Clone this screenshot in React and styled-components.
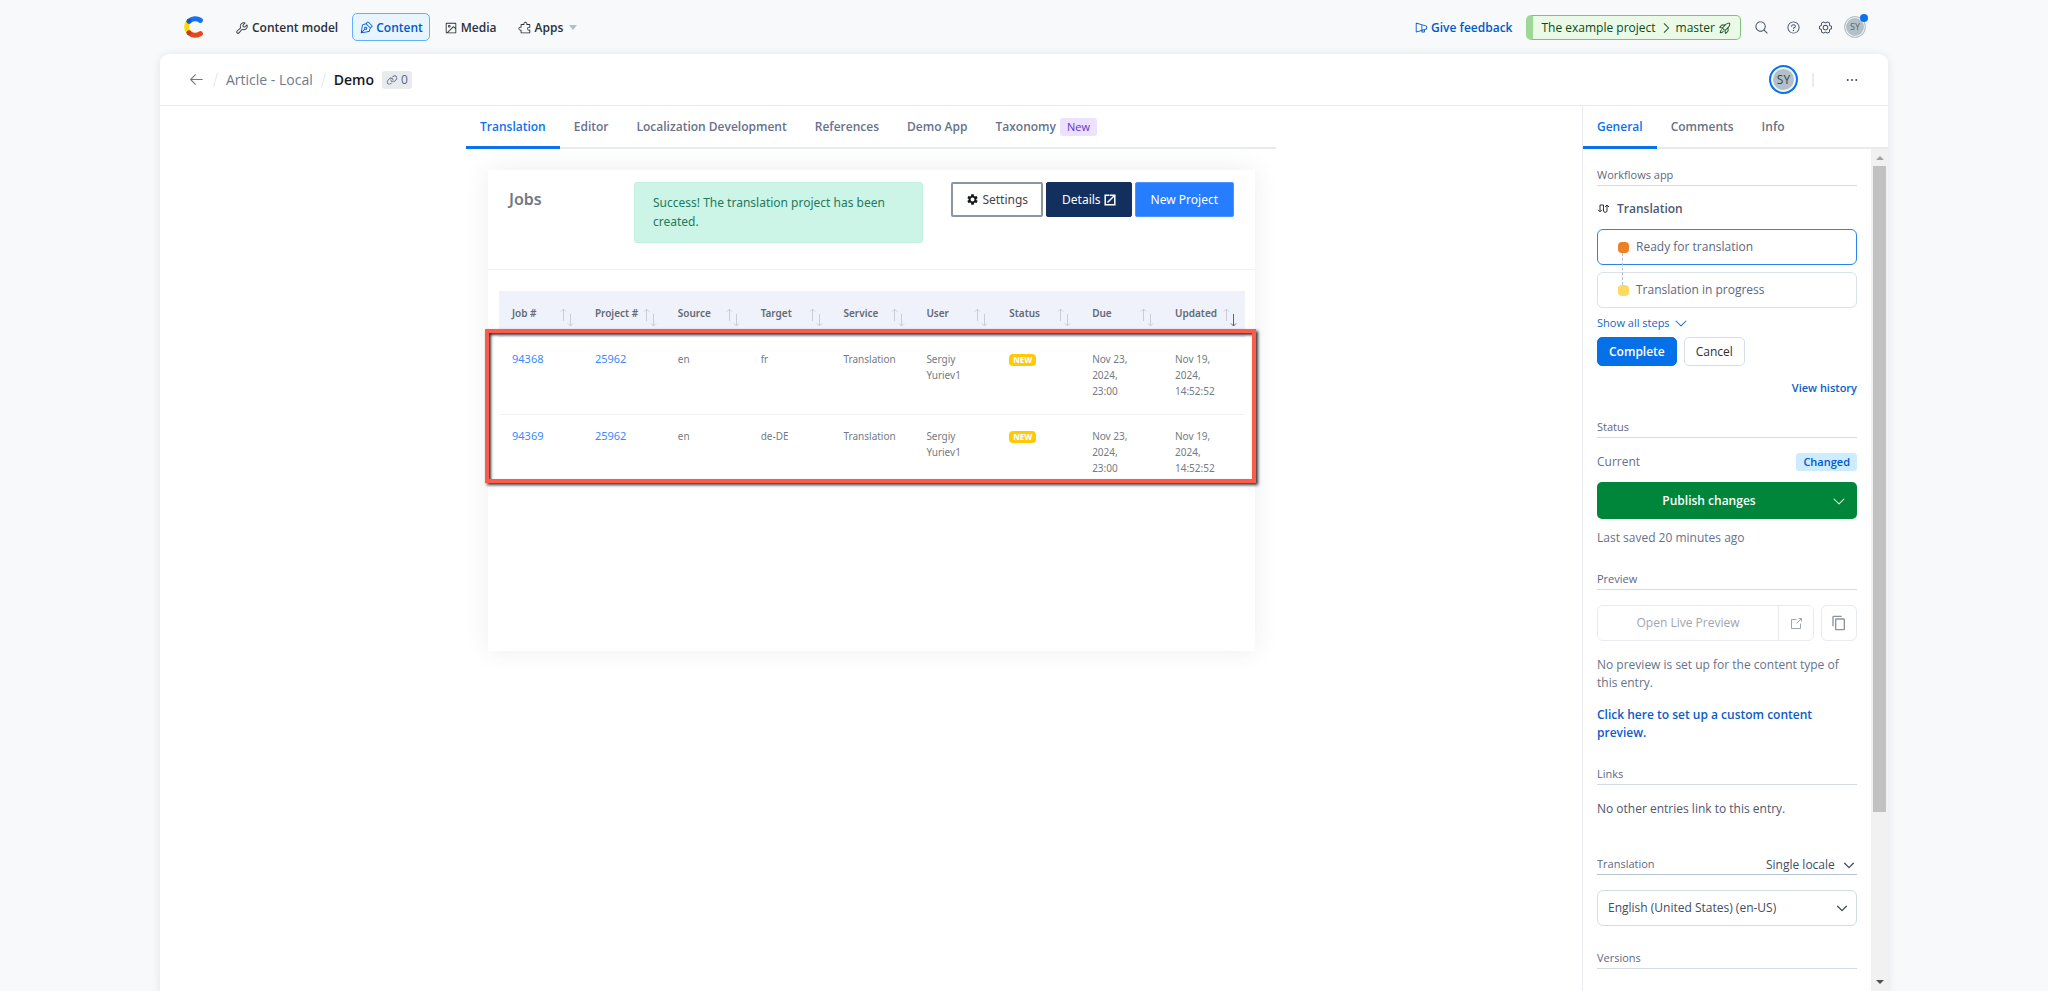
import React from "react";
import styled, { createGlobalStyle, css } from "styled-components";
import {
  PiWrench,
  PiPenNib,
  PiImageSquare,
  PiPuzzlePiece,
  PiMegaphoneSimple,
  PiRocketLaunch,
  PiMagnifyingGlass,
  PiQuestion,
  PiGearSix,
  PiLink,
  PiArrowLeft,
  PiDotsThreeBold,
  PiCaretDown,
  PiCaretDownBold,
  PiCaretRight,
} from "react-icons/pi";
import { MdSettings, MdContentCopy } from "react-icons/md";

const uiFont = '"Open Sans", "Noto Sans", sans-serif';
const appFont = '"Noto Sans", "Open Sans", sans-serif';

const GlobalStyle = createGlobalStyle`
  * { box-sizing: border-box; }
  body {
    margin: 0;
    background: #f7f9fa;
    color: #414d63;
    font: 12px/18px ${uiFont};
  }
  button, input, select { font: inherit; color: inherit; }
  button { cursor: pointer; }
  a { text-decoration: none; }
  h1, h2, h3, p, ul, ol { margin: 0; padding: 0; font-size: inherit; font-weight: inherit; }
  ul, ol { list-style: none; }
`;

/* ---------- page frame ---------- */

const Shell = styled.div`
  display: flex;
  flex-direction: column;
  height: 100vh;
  width: 100%;
  max-width: 1728px;
  margin: 0 auto;
`;

const TopBar = styled.header`
  display: flex;
  flex: none;
  align-items: center;
  justify-content: space-between;
  height: 54px;
  padding: 0 22px 0 23px;
`;

const Cluster = styled.div`
  display: flex;
  align-items: center;
`;

const MainNav = styled.nav`
  display: flex;
  align-items: center;
  gap: 7px;
  margin-left: 23px;
`;

const NavItem = styled.a`
  display: flex;
  align-items: center;
  gap: 3px;
  height: 28px;
  padding: 1px 6px 0;
  border: 1px solid transparent;
  border-radius: 5px;
  font-weight: 600;
  color: #2a3039;
  svg { flex: none; font-size: 14px; }
  ${(p) =>
    p.$active &&
    css`
      color: #0059c8;
      background: #e8f5ff;
      border-color: #5fb0ff;
    `}
`;

const DownTriangle = styled.span`
  border: 4px solid transparent;
  border-top: 5px solid #aec1cc;
  border-bottom: 0;
  margin-left: 3px;
`;

const Feedback = styled.a`
  display: flex;
  align-items: center;
  gap: 3px;
  margin-right: 14px;
  padding-top: 1px;
  font-weight: 600;
  color: #0059c8;
  svg { font-size: 14px; }
`;

const EnvButton = styled.button`
  display: flex;
  align-items: center;
  gap: 3px;
  height: 25px;
  margin-right: 12px;
  padding: 1px 8px 0;
  border: 1px solid #7ac47a;
  border-left-width: 7px;
  border-left-color: #9fd796;
  border-radius: 5px;
  background: #eafae6;
  font-weight: 500;
  color: #0b4a1b;
  svg { font-size: 14px; }
`;

const IconButton = styled.button`
  display: flex;
  align-items: center;
  justify-content: center;
  width: 32px;
  height: 24px;
  padding: 0;
  border: 0;
  background: none;
  color: #414d63;
  font-size: ${(p) => p.$size || 15}px;
`;

const TopIcons = styled.div`
  display: flex;
  margin: 0 3px 0 -8px;
`;

const Avatar = styled.button`
  position: relative;
  width: ${(p) => (p.$large ? 29 : 22)}px;
  height: ${(p) => (p.$large ? 29 : 22)}px;
  padding: 0;
  border: ${(p) => (p.$large ? "2px solid #0b72ee" : "1px solid #b4c3ca")};
  border-radius: 50%;
  background: #b4c0c7;
  box-shadow: inset 0 0 0 ${(p) => (p.$large ? 2 : 1)}px #f3f6f8;
  font-size: ${(p) => (p.$large ? 12 : 9)}px;
  line-height: 18px;
  color: ${(p) => (p.$large ? "#36424f" : "#566570")};
`;

const UnreadDot = styled.span`
  position: absolute;
  top: -3px;
  right: -3px;
  width: 8px;
  height: 8px;
  border-radius: 50%;
  background: #0b72ee;
`;

const Card = styled.main`
  display: flex;
  flex: 1;
  flex-direction: column;
  min-height: 0;
  border-radius: 9px 9px 0 0;
  background: #fff;
  box-shadow: 0 1px 10px rgba(25, 50, 70, 0.1);
`;

const EntryHeader = styled.div`
  display: flex;
  flex: none;
  align-items: center;
  justify-content: space-between;
  height: 52px;
  padding: 0 20px 0 28px;
  border-bottom: 1px solid #e9edf0;
`;

const Crumbs = styled.div`
  display: flex;
  align-items: center;
  gap: 8px;
  font-size: 14px;
  line-height: 20px;
  color: #71798a;
  a { color: inherit; }
  h1 { font-weight: 600; color: #15181f; }
`;

const BackLink = styled.a`
  display: flex;
  font-size: 17px;
`;

const Slash = styled.i`
  width: 1px;
  height: 14px;
  margin: 0 2px;
  background: #e2e7ea;
  transform: skewX(-16deg);
`;

const LinkCount = styled.span`
  display: flex;
  align-items: center;
  gap: 3px;
  height: 18px;
  padding: 0 4px;
  border-radius: 3px;
  background: #e7ebee;
  font-size: 12px;
  color: #5a657c;
`;

const Divider = styled.i`
  width: 2px;
  height: 14px;
  margin: 0 22px 0 14px;
  background: #e7ebee;
`;

const Body = styled.div`
  display: flex;
  flex: 1;
  min-height: 0;
`;

const Workspace = styled.section`
  flex: 1;
  min-width: 0;
`;

const EntryColumn = styled.div`
  max-width: 810px;
  margin: 0 auto;
`;

/* ---------- tabs ---------- */

const TabList = styled.div`
  display: flex;
  flex: none;
  height: 43px;
  box-shadow: inset 0 -2px 0 #e7ebee;
`;

const Tab = styled.button`
  display: flex;
  align-items: center;
  gap: 4px;
  padding: 0 14px 2px;
  border: 0;
  background: none;
  font-weight: 600;
  color: ${(p) => (p.$active ? "#0b72ee" : "#67728a")};
  box-shadow: ${(p) => (p.$active ? "inset 0 -3px 0 #0b72ee" : "none")};
`;

const NewTag = styled.span`
  padding: 0 7px;
  border-radius: 3px;
  background: #ece1ff;
  font-size: 11px;
  font-weight: 500;
  color: #6332c8;
`;

/* ---------- translation app ---------- */

const AppPanel = styled.section`
  height: 481px;
  margin: 21px 21px 0 22px;
  background: #fff;
  box-shadow: 0 0 24px rgba(60, 70, 80, 0.09);
  font-family: ${appFont};
`;

const AppHeader = styled.div`
  display: flex;
  align-items: flex-start;
  justify-content: space-between;
  height: 100px;
  padding: 12px 21px 0 21px;
  border-bottom: 1px solid #f1f2f4;
`;

const AppTitle = styled.h2`
  flex: 0 0 125px;
  padding-top: 8px;
  font-size: 16px;
  line-height: 18px;
  font-weight: 600;
  color: #717983;
`;

const Alert = styled.p`
  flex: 0 1 289px;
  padding: 10px 18px 11px;
  border: 1px solid #c0f0e0;
  border-radius: 3px;
  background: #ccf5e7;
  line-height: 19px;
  color: #217a5e;
`;

const AppActions = styled.div`
  display: flex;
  gap: 3px;
  margin-left: auto;
`;

const variants = {
  outline: css`
    padding: 0 13px;
    background: #fff;
    border: 2px solid #8b95a0;
    color: #3f454d;
    svg { color: #15181c; }
  `,
  dark: css`
    background: #122f5e;
    border: 1px solid #122f5e;
    color: #fff;
  `,
  primary: css`
    background: #267dff;
    border: 1px solid #4b93ff;
    color: #fff;
  `,
};

const AppButton = styled.button`
  display: flex;
  align-items: center;
  gap: 3px;
  height: 35px;
  padding: 0 15px;
  border-radius: 2px;
  white-space: nowrap;
  ${(p) => variants[p.$variant]}
`;

const TableWrap = styled.div`
  position: relative;
  margin: 21px 10px 0 11px;
`;

const JobsTable = styled.table`
  width: 100%;
  table-layout: fixed;
  border-collapse: collapse;
  font-size: 10px;
  line-height: 16px;
  color: #737b85;
  th, td { padding: 0 0 0 13px; text-align: left; vertical-align: top; }
  thead { background: #eff2fa; }
  th { height: 46px; padding-top: 14px; font-weight: 600; color: #626a74; }
  td { height: 77px; padding-top: 14px; padding-right: 18px; }
  tbody tr + tr td { box-shadow: inset 0 1px 0 #f1f2f4; }
  a { font-size: 11px; color: #3b89ff; }
`;

const HeadCell = styled.div`
  display: flex;
  justify-content: space-between;
  padding-right: 8px;
  white-space: nowrap;
  svg { margin-top: 2px; }
`;

const StatusBadge = styled.span`
  display: inline-block;
  padding: 0 4px;
  border-radius: 4px;
  background: #ffc906;
  font-size: 8px;
  line-height: 12px;
  font-weight: 800;
  color: #fff;
`;

const Highlight = styled.div`
  position: absolute;
  top: 38px;
  right: -11px;
  bottom: 8px;
  left: -14px;
  border: 4px solid #ff5a4a;
  box-shadow: 2px 2px 3px #333, inset 2px 2px 3px #333;
  pointer-events: none;
`;

/* ---------- sidebar ---------- */

const Sidebar = styled.aside`
  display: flex;
  flex: 0 0 306px;
  flex-direction: column;
  min-height: 0;
  border-left: 1px solid #e7ebee;
`;

const SidebarBody = styled.div`
  display: flex;
  flex: 1;
  min-height: 0;
`;

const SidebarContent = styled.div`
  flex: 1;
  display: flex;
  flex-direction: column;
  gap: 23px;
  min-width: 0;
  padding: 17px 14px 0;
  overflow: hidden;
`;

const Scrollbar = styled.div`
  display: flex;
  flex: 0 0 17px;
  flex-direction: column;
  align-items: center;
  padding: 7px 0;
  background: #f1f1f1;
`;

const ScrollArrow = styled.i`
  width: 8px;
  border: 4px solid transparent;
  ${(p) =>
    p.$up
      ? "border-top: 0; border-bottom-color: #a3a3a3;"
      : "border-bottom: 0; border-top-color: #505050;"}
`;

const ScrollTrack = styled.div`
  flex: 1;
  width: 13px;
  margin: 6px 0;
`;

const ScrollThumb = styled.div`
  height: 80%;
  background: #c1c1c1;
`;

const SectionTitle = styled.h2`
  display: flex;
  justify-content: space-between;
  height: 20px;
  border-bottom: 1px solid ${(p) => (p.$strong ? "#b5c3cd" : "#d3dce0")};
  font-size: 11px;
  line-height: 18px;
  font-weight: 500;
  color: #5d687f;
`;

const FlowTitle = styled.h3`
  display: flex;
  align-items: center;
  gap: 7px;
  margin: 14px 0 11px;
  font-weight: 600;
  color: #4c576d;
`;

const Steps = styled.ol`
  display: grid;
  gap: 7px;
`;

const Step = styled.li`
  position: relative;
  display: flex;
  align-items: center;
  gap: 7px;
  height: 36px;
  padding-left: 20px;
  border: 1px solid ${(p) => (p.$current ? "#2c82ec" : "#dbe1e6")};
  border-radius: 6px;
  color: #5d687c;
`;

const StepMark = styled.i`
  width: 11px;
  height: 11px;
  border-radius: 4px;
  background: ${(p) => p.$color};
`;

const StepLink = styled.i`
  position: absolute;
  z-index: 1;
  top: 23px;
  left: 24px;
  height: 32px;
  border-left: 1px dashed #a9bfd6;
`;

const ShowAll = styled.button`
  display: flex;
  align-items: center;
  gap: 3px;
  height: 18px;
  margin: 6px 0 5px;
  padding: 0;
  border: 0;
  background: none;
  font-size: 11px;
  color: #1565c8;
  svg { font-size: 16px; }
`;

const ButtonRow = styled.div`
  display: flex;
  gap: 7px;
`;

const SmallButton = styled.button`
  height: 29px;
  padding: 0 11px;
  border: 1px solid ${(p) => (p.$primary ? "#0670e8" : "#d8dfe4")};
  border-radius: 5px;
  background: ${(p) => (p.$primary ? "#0670e8" : "#fff")};
  font-weight: ${(p) => (p.$primary ? 600 : 500)};
  color: ${(p) => (p.$primary ? "#fff" : "#2a3039")};
`;

const HistoryLink = styled.a`
  display: block;
  margin-top: 15px;
  text-align: right;
  font-size: 11px;
  line-height: 14px;
  font-weight: 600;
  color: #0b5cc8;
`;

const StatusRow = styled.div`
  display: flex;
  align-items: center;
  justify-content: space-between;
  margin: 15px 0 11px;
  color: #67728a;
`;

const ChangedTag = styled.span`
  padding: 0 7px;
  border-radius: 3px;
  background: #ceecff;
  font-size: 11px;
  font-weight: 600;
  color: #0059c8;
`;

const PublishGroup = styled.div`
  display: flex;
  height: 37px;
  margin-bottom: 10px;
  overflow: hidden;
  border-radius: 5px;
  background: #00863a;
`;

const PublishButton = styled.button`
  flex: ${(p) => (p.$narrow ? "0 0 36px" : 1)};
  display: flex;
  align-items: center;
  justify-content: center;
  padding: 0;
  border: 0;
  background: none;
  font-weight: 600;
  color: #fff;
`;

const Muted = styled.p`
  line-height: 18px;
  color: #67728a;
`;

const LinksNote = styled(Muted)`
  margin: 15px 0 14px;
  color: #4c576d;
`;

const PreviewRow = styled.div`
  display: flex;
  gap: 7px;
  margin: 15px 0;
`;

const PreviewGroup = styled.div`
  display: flex;
  flex: 1;
  overflow: hidden;
  border: 1px solid #e7ebee;
  border-radius: 6px;
`;

const PreviewButton = styled.button`
  display: flex;
  flex: 1;
  align-items: center;
  justify-content: center;
  height: 34px;
  padding: 0;
  border: 0;
  background: #fff;
  font-weight: 500;
  color: #a0a6af;
`;

const OpenButton = styled(PreviewButton)`
  flex: 0 0 35px;
  border-left: 1px solid #e7ebee;
`;

const CopyButton = styled(PreviewButton)`
  flex: 0 0 36px;
  height: 36px;
  border: 1px solid #e7ebee;
  border-radius: 6px;
  color: #8b929c;
`;

const SetupLink = styled.a`
  display: block;
  margin-top: 14px;
  font-weight: 600;
  color: #0b5cc8;
`;

const SelectBox = styled.label`
  position: relative;
  display: flex;
  align-items: center;
  font-size: 12px;
  font-weight: 400;
  color: #414d63;
  svg {
    position: absolute;
    right: ${(p) => (p.$framed ? 8 : 1)}px;
    pointer-events: none;
    font-size: 14px;
  }
`;

const PlainSelect = styled.select`
  appearance: none;
  height: 18px;
  padding: 0 22px 0 0;
  border: 0;
  background: none;
`;

const LocaleBox = styled(SelectBox)`
  margin-top: 15px;
`;

const FramedSelect = styled.select`
  appearance: none;
  width: 100%;
  height: 36px;
  padding: 0 28px 0 10px;
  border: 1px solid #d3dce3;
  border-radius: 6px;
  background: #fff;
`;

/* ---------- drawings ---------- */

const Logo = () => (
  <svg width="22" height="24" viewBox="0 0 22 24" fill="none" strokeLinecap="round" strokeWidth="5">
    <path d="M6 6.2A8.4 8.4 0 0 0 6 17.8" stroke="#ffda00" />
    <path d="M6 6.2C9 3.2 14 3 17.4 5.4" stroke="#1773eb" />
    <path d="M6 17.8C9 20.8 14 21 17.4 18.6" stroke="#e8471c" />
    <circle cx="6" cy="6.2" r="2.4" fill="#0a5ad6" />
    <circle cx="6" cy="17.8" r="2.4" fill="#c93a1c" />
  </svg>
);

const SortArrows = ({ down }) => (
  <svg width="14" height="20" viewBox="0 0 14 20" fill="none" strokeWidth="1">
    <path d="M3.5 14V2M1 4.5L3.5 2L6 4.5" stroke="#c9cdd5" />
    <path d="M10.5 7V19M8 16.5L10.5 19L13 16.5" stroke={down ? "#5d646e" : "#c9cdd5"} />
  </svg>
);

const WorkflowIcon = () => (
  <svg width="13" height="12" viewBox="0 0 13 12" fill="none" stroke="#2a3039">
    <path d="M3 8.5V2H6.5V8A1.8 1.8 0 0 0 10 8V2M1 6.8L3 8.8L5 6.8M8 4L10 2L12 4" />
  </svg>
);

const DetailsIcon = () => (
  <svg width="12" height="12" viewBox="0 0 12 12" fill="none" stroke="currentColor" strokeWidth="1.5">
    <path d="M5.5 1.2H1.2V10.8H10.8V1.2H7M10.5 1.5L3.5 8.5M6 1.2H10.8V6" />
  </svg>
);

const PreviewIcon = () => (
  <svg width="13" height="13" viewBox="0 0 13 13" fill="none" stroke="currentColor">
    <path d="M6.5 2.5H1.5V11.5H10.5V6.5M8.5 1.5H11.5V4.5M11.5 1.5L6.5 6.5" />
  </svg>
);

/* ---------- content ---------- */

const entryTabs = ["Translation", "Editor", "Localization Development", "References", "Demo App", "Taxonomy"];
const sideTabs = ["General", "Comments", "Info"];
const columns = ["Job #", "Project #", "Source", "Target", "Service", "User", "Status", "Due", "Updated"];
const jobs = [
  { id: "94368", project: "25962", source: "en", target: "fr" },
  { id: "94369", project: "25962", source: "en", target: "de-DE" },
];

const Jobs = () => (
  <AppPanel>
    <AppHeader>
      <AppTitle>Jobs</AppTitle>
      <Alert role="status">Success! The translation project has been created.</Alert>
      <AppActions>
        <AppButton $variant="outline"><MdSettings size={13} />Settings</AppButton>
        <AppButton $variant="dark">Details<DetailsIcon /></AppButton>
        <AppButton $variant="primary">New Project</AppButton>
      </AppActions>
    </AppHeader>
    <TableWrap>
      <JobsTable>
        <thead>
          <tr>
            {columns.map((c) => (
              <th key={c} scope="col">
                <HeadCell>{c}<SortArrows down={c === "Updated"} /></HeadCell>
              </th>
            ))}
          </tr>
        </thead>
        <tbody>
          {jobs.map((j) => (
            <tr key={j.id}>
              <td><a href="#job">{j.id}</a></td>
              <td><a href="#project">{j.project}</a></td>
              <td>{j.source}</td>
              <td>{j.target}</td>
              <td>Translation</td>
              <td>Sergiy Yuriev1</td>
              <td><StatusBadge>NEW</StatusBadge></td>
              <td>Nov 23, 2024, 23:00</td>
              <td>Nov 19, 2024, 14:52:52</td>
            </tr>
          ))}
        </tbody>
      </JobsTable>
      <Highlight />
    </TableWrap>
  </AppPanel>
);

const SidebarPanels = () => (
  <SidebarContent>
    <section>
      <SectionTitle>Workflows app</SectionTitle>
      <FlowTitle><WorkflowIcon />Translation</FlowTitle>
      <Steps>
        <Step $current><StepMark $color="#ef8022" />Ready for translation<StepLink /></Step>
        <Step><StepMark $color="#ffda63" />Translation in progress</Step>
      </Steps>
      <ShowAll>Show all steps<PiCaretDown /></ShowAll>
      <ButtonRow>
        <SmallButton $primary>Complete</SmallButton>
        <SmallButton>Cancel</SmallButton>
      </ButtonRow>
      <HistoryLink href="#history">View history</HistoryLink>
    </section>
    <section>
      <SectionTitle>Status</SectionTitle>
      <StatusRow>Current<ChangedTag>Changed</ChangedTag></StatusRow>
      <PublishGroup>
        <PublishButton>Publish changes</PublishButton>
        <PublishButton $narrow aria-label="More publish options"><PiCaretDown size={16} /></PublishButton>
      </PublishGroup>
      <Muted>Last saved 20 minutes ago</Muted>
    </section>
    <section>
      <SectionTitle>Preview</SectionTitle>
      <PreviewRow>
        <PreviewGroup>
          <PreviewButton>Open Live Preview</PreviewButton>
          <OpenButton aria-label="Open preview in new tab"><PreviewIcon /></OpenButton>
        </PreviewGroup>
        <CopyButton aria-label="Copy preview link"><MdContentCopy size={16} /></CopyButton>
      </PreviewRow>
      <Muted>No preview is set up for the content type of this entry.</Muted>
      <SetupLink href="#setup">Click here to set up a custom content preview.</SetupLink>
    </section>
    <section>
      <SectionTitle>Links</SectionTitle>
      <LinksNote>No other entries link to this entry.</LinksNote>
    </section>
    <section>
      <SectionTitle $strong>
        Translation
        <SelectBox>
          <PlainSelect aria-label="Locale mode" defaultValue="s"><option value="s">Single locale</option></PlainSelect>
          <PiCaretDownBold />
        </SelectBox>
      </SectionTitle>
      <LocaleBox $framed>
        <FramedSelect aria-label="Locale" defaultValue="e"><option value="e">English (United States) (en-US)</option></FramedSelect>
        <PiCaretDownBold />
      </LocaleBox>
    </section>
    <section>
      <SectionTitle>Versions</SectionTitle>
    </section>
  </SidebarContent>
);

export default function App() {
  return (
    <>
      <GlobalStyle />
      <Shell>
        <TopBar>
          <Cluster>
            <Logo />
            <MainNav>
              <NavItem href="#model"><PiWrench />Content model</NavItem>
              <NavItem href="#content" $active><PiPenNib />Content</NavItem>
              <NavItem href="#media"><PiImageSquare />Media</NavItem>
              <NavItem href="#apps"><PiPuzzlePiece />Apps<DownTriangle /></NavItem>
            </MainNav>
          </Cluster>
          <Cluster>
            <Feedback href="#feedback"><PiMegaphoneSimple />Give feedback</Feedback>
            <EnvButton>The example project<PiCaretRight />master<PiRocketLaunch /></EnvButton>
            <TopIcons>
              <IconButton aria-label="Search"><PiMagnifyingGlass /></IconButton>
              <IconButton aria-label="Help"><PiQuestion /></IconButton>
              <IconButton aria-label="Settings"><PiGearSix /></IconButton>
            </TopIcons>
            <Avatar>SY<UnreadDot /></Avatar>
          </Cluster>
        </TopBar>
        <Card>
          <EntryHeader>
            <Crumbs>
              <BackLink href="#back" aria-label="Back"><PiArrowLeft /></BackLink>
              <Slash />
              <a href="#type">Article - Local</a>
              <Slash />
              <h1>Demo</h1>
              <LinkCount><PiLink />0</LinkCount>
            </Crumbs>
            <Cluster>
              <Avatar $large>SY</Avatar>
              <Divider />
              <IconButton $size={16} aria-label="More actions"><PiDotsThreeBold /></IconButton>
            </Cluster>
          </EntryHeader>
          <Body>
            <Workspace>
              <EntryColumn>
                <TabList role="tablist">
                  {entryTabs.map((t, i) => (
                    <Tab key={t} role="tab" aria-selected={i === 0} $active={i === 0}>
                      {t}
                      {t === "Taxonomy" && <NewTag>New</NewTag>}
                    </Tab>
                  ))}
                </TabList>
                <Jobs />
              </EntryColumn>
            </Workspace>
            <Sidebar>
              <TabList role="tablist">
                {sideTabs.map((t, i) => (
                  <Tab key={t} role="tab" aria-selected={i === 0} $active={i === 0}>{t}</Tab>
                ))}
              </TabList>
              <SidebarBody>
                <SidebarPanels />
                <Scrollbar>
                  <ScrollArrow $up />
                  <ScrollTrack><ScrollThumb /></ScrollTrack>
                  <ScrollArrow />
                </Scrollbar>
              </SidebarBody>
            </Sidebar>
          </Body>
        </Card>
      </Shell>
    </>
  );
}
